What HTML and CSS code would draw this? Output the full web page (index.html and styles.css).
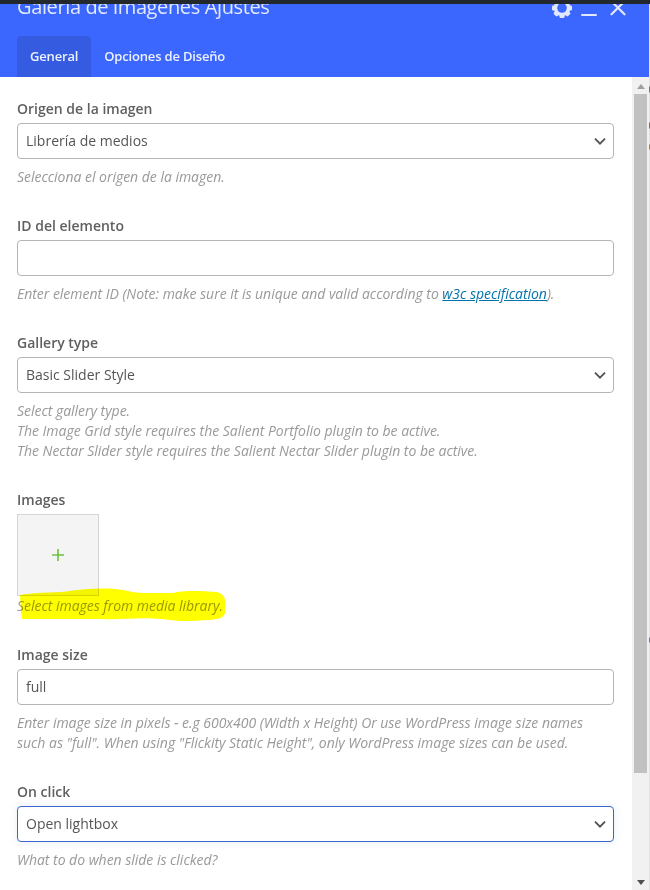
FILE: index.html
```
<!DOCTYPE html>
<html lang="es">
<head>
<meta charset="utf-8">
<title>Galería de imágenes Ajustes</title>
<link rel="stylesheet" href="styles.css">
</head>
<body>
<div class="window">
  <header class="header">
    <div class="titlebar">
      <h1 class="title">Galería de imágenes Ajustes</h1>
      <div class="controls">
        <svg class="gear" width="22" height="22" viewBox="-11 -11 22 22"><g fill="currentColor"><g id="teeth"><rect x="-2.5" y="-10" width="5" height="20" rx="1.2"/><rect x="-10" y="-2.5" width="20" height="5" rx="1.2"/></g><use href="#teeth" transform="rotate(45)"/><circle r="8.3"/></g><circle r="4.8" class="gear-hole"/></svg>
        <svg class="minimize" width="16" height="22" viewBox="0 0 16 22"><path d="M1 18H15" stroke="currentColor" stroke-width="2" stroke-linecap="round"/></svg>
        <svg class="close" width="16" height="22" viewBox="0 0 16 22"><path d="M1.500 4.300L14.500 17.300M14.500 4.300L1.500 17.300" stroke="currentColor" stroke-width="2.2" stroke-linecap="round"/></svg>
      </div>
    </div>
    <nav class="tabs">
      <span class="tab active">General</span>
      <span class="tab">Opciones de Diseño</span>
    </nav>
  </header>
  <div class="body">
    <main class="form">
      <section class="field">
        <div class="label">Origen de la imagen</div>
        <div class="control"><span>Librería de medios</span><svg class="chevron" width="12" height="8" viewBox="0 0 12 8"><path d="M1 1.700L6 6.700L11 1.700"/></svg></div>
        <p class="help">Selecciona el origen de la imagen.</p>
      </section>
      <section class="field">
        <div class="label">ID del elemento</div>
        <div class="control"></div>
        <p class="help">Enter element ID (Note: make sure it is unique and valid according to <a class="link">w3c specification</a>).</p>
      </section>
      <section class="field">
        <div class="label">Gallery type</div>
        <div class="control"><span>Basic Slider Style</span><svg class="chevron" width="12" height="8" viewBox="0 0 12 8"><path d="M1 1.700L6 6.700L11 1.700"/></svg></div>
        <p class="help">Select gallery type.<br>The Image Grid style requires the Salient Portfolio plugin to be active.<br>The Nectar Slider style requires the Salient Nectar Slider plugin to be active.</p>
      </section>
      <section class="field images">
        <div class="label">Images</div>
        <div class="add"><svg width="12" height="12" viewBox="0 0 12 12"><path d="M6 0V12M0 6H12" stroke="currentColor" stroke-width="1.6"/></svg></div>
        <p class="help">Select images from media library.</p>
        <svg class="marker" width="210" height="36" viewBox="0 0 210 36"><path d="M3 7C18 4 35 5 49 3.500C65 1 83 0 98 1C110 2 116 5 127 5H156C166 2 185 3 200 4C206 6 208 9 208 13V25C207 30 200 32 189 32C174 34 158 33 145 31C120 29 107 32 85 31H5L4 24Z"/></svg>
      </section>
      <section class="field">
        <div class="label">Image size</div>
        <div class="control"><span>full</span></div>
        <p class="help">Enter image size in pixels - e.g 600x400 (Width x Height) Or use WordPress image size names<br>such as "full". When using "Flickity Static Height", only WordPress image sizes can be used.</p>
      </section>
      <section class="field">
        <div class="label">On click</div>
        <div class="control focused"><span>Open lightbox</span><svg class="chevron" width="12" height="8" viewBox="0 0 12 8"><path d="M1 1.700L6 6.700L11 1.700"/></svg></div>
        <p class="help">What to do when slide is clicked?</p>
      </section>
    </main>
    <div class="scrollbar">
      <svg class="arrow up" width="8" height="5" viewBox="0 0 8 5"><path d="M0 5L4 0L8 5Z"/></svg>
      <div class="thumb"></div>
      <svg class="arrow" width="8" height="5" viewBox="0 0 8 5"><path d="M0 0H8L4 5Z"/></svg>
    </div>
  </div>
</div>
</body>
</html>
```
FILE: styles.css
```
* { box-sizing: border-box; }
body {
  margin: 0;
  height: 890px;
  overflow: hidden;
  /* sliver of the page behind the window */
  background: linear-gradient(#e2e2e4 86px, #777 87px 92px, #e2e2e4 93px 122px, #846b62 123px 128px, #e2e2e4 129px 144px, #a18255 145px 149px, #e2e2e4 150px 637px, #778 638px 642px, #e2e2e4 643px);
  border-top: 4px solid #23282d;
  font: 14px/20px "Open Sans", sans-serif;
  color: #555;
}
.window { width: 649px; height: 886px; background: #fff; overflow: hidden; }
.header { height: 73px; background: #3b67ff; color: #fff; overflow: hidden; padding-left: 17px; }
.titlebar { display: flex; justify-content: space-between; height: 32px; margin-top: -10px; padding-right: 23px; color: #e1e8ff; }
.title { margin: 0; font-size: 20px; font-weight: 400; line-height: 26px; letter-spacing: -.37px; white-space: nowrap; }
.controls { display: flex; margin-top: 3px; }
.gear-hole { fill: #3b67ff; }
.minimize { margin-left: 8px; }
.close { margin-left: 13px; }
.tabs { display: flex; margin-top: 10px; }
.tab { height: 41px; padding: 0 13px; line-height: 41px; font-size: 13px; font-weight: 600; letter-spacing: -.17px; color: #edf1ff; }
.tab.active { background: #345be0; border-radius: 4px 4px 0 0; }
.body { display: flex; height: 813px; }
.form { flex: 1; padding: 22px 18px 0 17px; }
.field { margin-bottom: 29px; }
.label { font-weight: 600; margin-bottom: 4px; color: #606060; }
.control {
  display: flex;
  align-items: center;
  justify-content: space-between;
  height: 36px;
  padding: 0 7px 0 8px;
  border: 1px solid #b5b5b5;
  border-radius: 4px;
}
.control.focused { border-color: #3d64cc; box-shadow: 0 0 8px rgba(60, 130, 180, .13); }
.chevron { fill: none; stroke: #505050; stroke-width: 1.8; }
.help { margin: 8px 0 0; font-style: italic; letter-spacing: -.025px; color: #999; white-space: nowrap; }
.link { color: #0073aa; text-decoration: underline; }
.images { position: relative; }
.images .help { margin-top: 0; }
.add {
  display: flex;
  align-items: center;
  justify-content: center;
  width: 82px;
  height: 82px;
  border: 1px solid #d5d5d5;
  background: #f4f4f4;
  color: #6fc13e;
}
.marker { position: absolute; left: 0; top: 98px; fill: #ff0; mix-blend-mode: multiply; }
.scrollbar { width: 17px; background: #f1f1f1; display: flex; flex-direction: column; align-items: center; }
.thumb { width: 13px; height: 679px; background: #c1c1c1; margin-top: 5px; }
.arrow { fill: #505050; margin-top: 107px; }
.arrow.up { fill: #a0a0a0; margin-top: 7px; }
```
